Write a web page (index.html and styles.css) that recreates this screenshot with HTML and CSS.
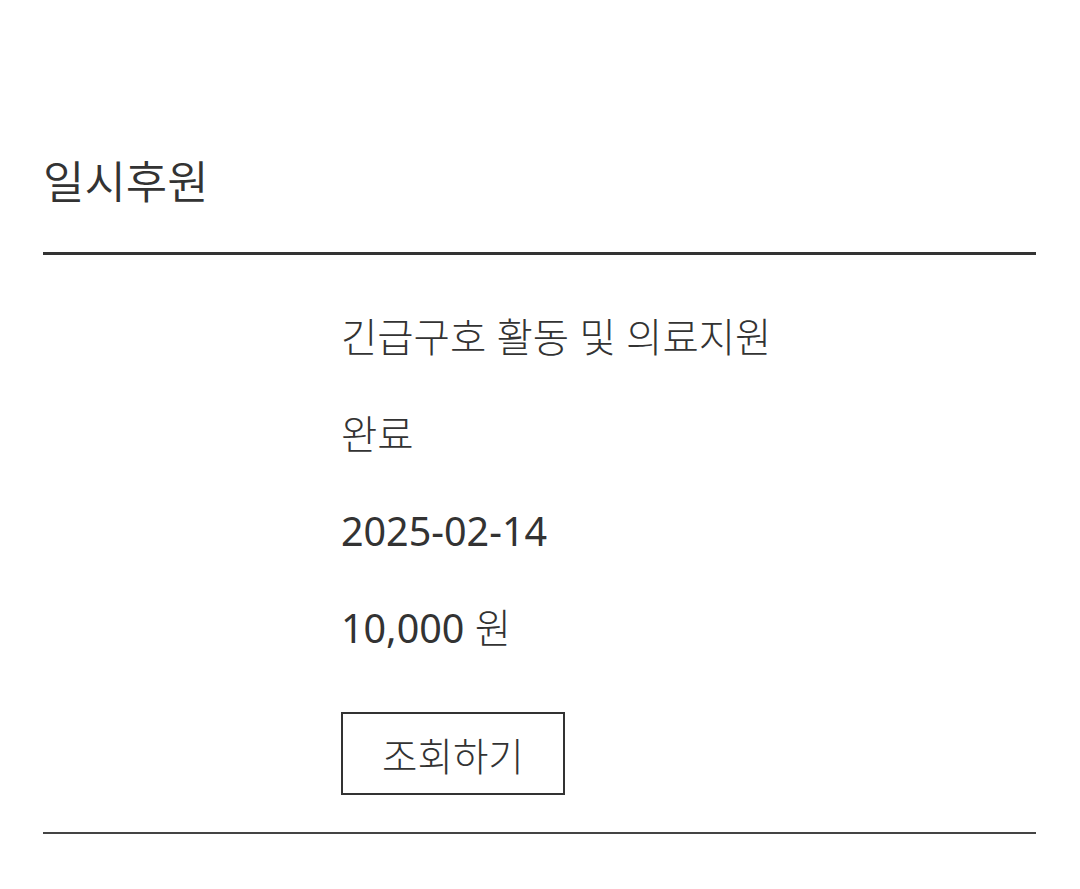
FILE: index.html
```html
<!DOCTYPE html>
<html lang="ko">
<head>
  <meta charset="UTF-8">
  <title>일시후원</title>
  <link rel="stylesheet" href="styles.css">
</head>
<body>
  <div id="history">
    <h2 class="history-title">일시후원</h2>
    <ul class="history-list">
      <li class="history-item">
        <div class="thumb"></div>
        <div class="info">
          <p class="campaign">긴급구호 활동 및 의료지원</p>
          <p class="status">완료</p>
          <p class="date"><span class="num">2025-02-14</span></p>
          <p class="amount"><span class="num">10,000</span> 원</p>
          <button class="btn-detail" type="button">조회하기</button>
        </div>
      </li>
    </ul>
  </div>
</body>
</html>
```

FILE: styles.css
```css
body {
  margin: 0;
  background: #fff;
  color: #333;
  font-family: "Noto Sans", "Noto Sans CJK KR", sans-serif;
  font-weight: 300;
}

#history {
  padding: 152px 44px 0 43px;
}

.history-title {
  margin: 0;
  padding-bottom: 40px;
  border-bottom: 3px solid #333;
  font-size: 45px;
  font-weight: 350;
  line-height: 60px;
}

.history-list {
  list-style: none;
  margin: 0;
  padding: 0;
}

.history-item {
  display: grid;
  grid-template-columns: 30% 1fr;
  padding: 56px 0 37px;
  border-bottom: 2px solid #444;
}

.info p {
  margin: 0 0 45px;
  font-size: 39.5px;
  line-height: 52px;
}

.info .num {
  font-weight: 400;
}

.btn-detail {
  width: 224px;
  height: 83px;
  margin-top: 13px;
  background: #fff;
  border: 2px solid #333;
  color: #333;
  font-family: inherit;
  font-weight: 300;
  font-size: 38.5px;
}
```
